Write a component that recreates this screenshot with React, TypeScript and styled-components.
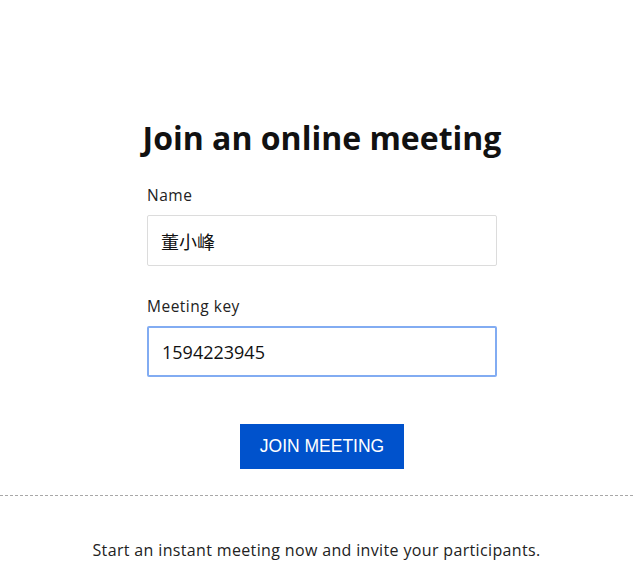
import styled, { createGlobalStyle } from "styled-components";

const GlobalStyle = createGlobalStyle`
    body {
        margin: 0;
        background: #fff;
        font-family: "Open Sans", "Noto Sans", "Noto Sans CJK SC", sans-serif;
        color: #222;
    }
`;

const Page = styled.div`
    display: flex;
    flex-direction: column;
    width: 100%;
`;

const JoinSection = styled.section`
    display: flex;
    flex-direction: column;
    align-items: center;
    padding: 117px 0 0 11px;
`;

const Title = styled.h1`
    margin: 0 0 26px;
    font-size: 32px;
    line-height: 42px;
    font-weight: 700;
    color: #111;
`;

const Form = styled.form`
    display: flex;
    flex-direction: column;
    width: 350px;
`;

const Field = styled.div`
    display: flex;
    flex-direction: column;
    & + & {
        margin-top: 30px;
    }
`;

const Label = styled.label`
    font-size: 15.5px;
    line-height: 20px;
    letter-spacing: 0.5px;
    color: #222;
    margin-bottom: 10px;
`;

const Input = styled.input<{ $active?: boolean }>`
    box-sizing: border-box;
    height: 51px;
    width: 100%;
    padding: 0 13px;
    font-family: "Open Sans", "Noto Sans CJK SC", sans-serif;
    font-size: 18px;
    color: #111;
    background: #fff;
    border: ${(p) => (p.$active ? "2px solid #82acf2" : "1px solid #dcdcdc")};
    border-radius: 2px;
    outline: none;
    caret-color: #000;
`;

const Actions = styled.div`
    display: flex;
    justify-content: center;
    margin-top: 47px;
`;

const JoinButton = styled.button`
    width: 164px;
    height: 45px;
    border: none;
    border-radius: 0;
    background: #0052cc;
    color: #fff;
    font-family: "Liberation Sans", Arial, sans-serif;
    font-size: 17.5px;
    cursor: pointer;
`;

const Divider = styled.hr`
    width: 100%;
    margin: 26px 0 0;
    border: none;
    border-top: 1px dashed #a8a8a8;
`;

const InstantText = styled.p`
    margin: 44px 0 0;
    text-align: center;
    font-size: 16px;
    line-height: 20px;
    letter-spacing: 0.35px;
    color: #222;
`;

export default function App() {
    return (
        <Page>
            <GlobalStyle />
            <JoinSection>
                <Title>Join an online meeting</Title>
                <Form onSubmit={(e) => e.preventDefault()}>
                    <Field>
                        <Label htmlFor="name">Name</Label>
                        <Input id="name" defaultValue="董小峰" />
                    </Field>
                    <Field>
                        <Label htmlFor="key">Meeting key</Label>
                        <Input id="key" $active autoFocus defaultValue="1594223945" />
                    </Field>
                    <Actions>
                        <JoinButton type="submit">JOIN MEETING</JoinButton>
                    </Actions>
                </Form>
            </JoinSection>
            <Divider />
            <InstantText>Start an instant meeting now and invite your participants.</InstantText>
        </Page>
    );
}
